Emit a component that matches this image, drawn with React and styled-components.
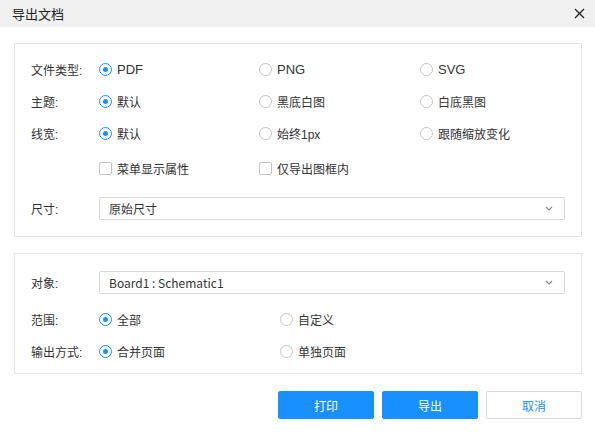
import styled, { createGlobalStyle } from "styled-components";

const Global = createGlobalStyle`
    html, body {
        margin: 0;
        padding: 0;
        background: #fff;
    }
    body {
        font-family: "Liberation Sans", "Noto Sans CJK SC", sans-serif;
        font-size: 12px;
        color: #333;
    }
`;

const Dialog = styled.div`
    width: 595px;
    height: 435px;
    background: #fff;
    display: flex;
    flex-direction: column;
`;

const TitleBar = styled.div`
    height: 27px;
    background: #f0f0f0;
    display: flex;
    align-items: center;
    justify-content: space-between;
    padding: 0 10px 0 12px;
    font-size: 13px;
    color: #222;
`;

const Close = styled.svg`
    width: 11px;
    height: 11px;
`;

const Body = styled.div`
    padding: 16px 13px 0 14px;
    display: flex;
    flex-direction: column;
`;

const Panel = styled.div`
    border: 1px solid #e4e4e4;
    padding: ${(p) => p.$pad};
    margin-bottom: 16px;
    display: flex;
    flex-direction: column;
`;

const Row = styled.div`
    display: flex;
    align-items: center;
    height: ${(p) => p.$h || 32}px;
    margin-top: ${(p) => p.$mt || 0}px;
`;

const Label = styled.div`
    width: 68px;
    flex: none;
    color: #333;
`;

const Options = styled.div`
    display: grid;
    grid-template-columns: ${(p) => p.$cols};
    flex: 1;
`;

const Option = styled.div`
    display: flex;
    align-items: center;
    gap: 5px;
    color: #333;
    font-size: ${(p) => (p.$latin ? "13px" : "12px")};
`;

const Radio = styled.span`
    width: 13px;
    height: 13px;
    box-sizing: border-box;
    border-radius: 50%;
    border: 1px solid ${(p) => (p.$on ? "#1890ff" : "#c4c4c4")};
    display: flex;
    align-items: center;
    justify-content: center;
    background: #fff;
    &::after {
        content: "";
        width: 5px;
        height: 5px;
        border-radius: 50%;
        background: ${(p) => (p.$on ? "#1890ff" : "transparent")};
    }
`;

const Check = styled.span`
    width: 13px;
    height: 13px;
    box-sizing: border-box;
    border: 1px solid #c4c4c4;
    border-radius: 2px;
    background: #fff;
`;

const Select = styled.div`
    flex: 1;
    height: 23px;
    box-sizing: border-box;
    border: 1px solid #d9d9d9;
    border-radius: 2px;
    display: flex;
    align-items: center;
    justify-content: space-between;
    padding: 0 11px 0 9px;
    font-family: "Noto Sans CJK SC", "Liberation Sans", sans-serif;
    font-size: 12px;
    color: #333;
`;

const Chevron = styled.svg`
    width: 8px;
    height: 5px;
`;

const Footer = styled.div`
    display: flex;
    justify-content: flex-end;
    gap: 8px;
    padding-top: 1px;
`;

const Button = styled.button`
    width: 96px;
    height: 28px;
    box-sizing: border-box;
    border-radius: 2px;
    font-family: "Noto Sans CJK SC", sans-serif;
    font-size: 12px;
    cursor: pointer;
    border: 1px solid ${(p) => (p.$primary ? "#1890ff" : "#d9d9d9")};
    background: ${(p) => (p.$primary ? "#1890ff" : "#fff")};
    color: ${(p) => (p.$primary ? "#fff" : "#1890ff")};
`;

function RadioRow({ label, items, cols, h, mt }) {
    return (
        <Row $h={h} $mt={mt}>
            <Label>{label}</Label>
            <Options $cols={cols}>
                {items.map((it, i) => (
                    <Option key={it} $latin={/^[A-Z]+$/.test(it)}>
                        <Radio $on={i === 0} />
                        {it}
                    </Option>
                ))}
            </Options>
        </Row>
    );
}

function SelectBox({ value }) {
    return (
        <Select>
            <span>{value}</span>
            <Chevron viewBox="0 0 8 5">
                <path d="M1 1l3 3 3-3" fill="none" stroke="#888" strokeWidth="1.2" />
            </Chevron>
        </Select>
    );
}

export default function App() {
    const cols3 = "160px 161px 1fr";
    const cols2 = "181px 1fr";
    return (
        <Dialog>
            <Global />
            <TitleBar>
                <span>导出文档</span>
                <Close viewBox="0 0 11 11">
                    <path d="M1 1l9 9M10 1l-9 9" stroke="#222" strokeWidth="1.3" />
                </Close>
            </TitleBar>
            <Body>
                <Panel $pad="9px 16px 16px 16px">
                    <RadioRow label="文件类型:" items={["PDF", "PNG", "SVG"]} cols={cols3} />
                    <RadioRow label="主题:" items={["默认", "黑底白图", "白底黑图"]} cols={cols3} />
                    <RadioRow label="线宽:" items={["默认", "始终1px", "跟随缩放变化"]} cols={cols3} />
                    <Row $h={38}>
                        <Label />
                        <Options $cols={cols3}>
                            <Option>
                                <Check />
                                菜单显示属性
                            </Option>
                            <Option>
                                <Check />
                                仅导出图框内
                            </Option>
                        </Options>
                    </Row>
                    <Row $h={23} $mt={10}>
                        <Label>尺寸:</Label>
                        <SelectBox value="原始尺寸" />
                    </Row>
                </Panel>
                <Panel $pad="17px 16px 6px 16px">
                    <Row $h={23}>
                        <Label>对象:</Label>
                        <SelectBox value="Board1 : Schematic1" />
                    </Row>
                    <RadioRow label="范围:" items={["全部", "自定义"]} cols={cols2} mt={9} />
                    <RadioRow label="输出方式:" items={["合并页面", "单独页面"]} cols={cols2} />
                </Panel>
                <Footer>
                    <Button $primary>打印</Button>
                    <Button $primary>导出</Button>
                    <Button>取消</Button>
                </Footer>
            </Body>
        </Dialog>
    );
}
